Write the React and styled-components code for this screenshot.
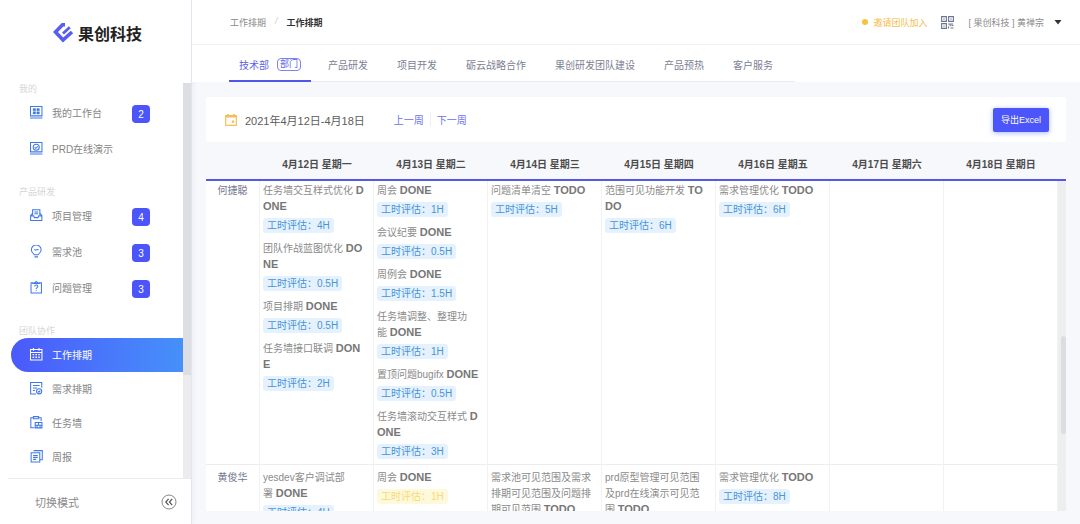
import React, { useLayoutEffect, useRef, useState } from "react";
import styled, { createGlobalStyle } from "styled-components";

const menu = [
  {
    title: "我的",
    items: [
      { name: "我的工作台", icon: "desk", count: 2 },
      { name: "PRD在线演示", icon: "demo" },
    ],
  },
  {
    title: "产品研发",
    items: [
      { name: "项目管理", icon: "project", count: 4 },
      { name: "需求池", icon: "pool", count: 3 },
      { name: "问题管理", icon: "issue", count: 3 },
    ],
  },
  {
    title: "团队协作",
    compact: true,
    items: [
      { name: "工作排期", icon: "calendar" },
      { name: "需求排期", icon: "plan" },
      { name: "任务墙", icon: "wall" },
      { name: "周报", icon: "weekly" },
    ],
  },
];

const tabs = ["技术部", "产品研发", "项目开发", "砺云战略合作", "果创研发团队建设", "产品预热", "客户服务"];

const days = [
  "4月12日 星期一",
  "4月13日 星期二",
  "4月14日 星期三",
  "4月15日 星期四",
  "4月16日 星期五",
  "4月17日 星期六",
  "4月18日 星期日",
];

const members = [
  {
    name: "何捷聪",
    days: [
      [
        { title: "任务墙交互样式优化", status: "DONE", hours: "4H" },
        { title: "团队作战蓝图优化", status: "DONE", hours: "0.5H" },
        { title: "项目排期", status: "DONE", hours: "0.5H" },
        { title: "任务墙接口联调", status: "DONE", hours: "2H" },
      ],
      [
        { title: "周会", status: "DONE", hours: "1H" },
        { title: "会议纪要", status: "DONE", hours: "0.5H" },
        { title: "周例会", status: "DONE", hours: "1.5H" },
        { title: "任务墙调整、整理功\n能", status: "DONE", hours: "1H" },
        { title: "置顶问题bugifx", status: "DONE", hours: "0.5H" },
        { title: "任务墙滚动交互样式", status: "DONE", hours: "3H" },
      ],
      [{ title: "问题清单清空", status: "TODO", hours: "5H" }],
      [{ title: "范围可见功能开发", status: "TODO", hours: "6H" }],
      [{ title: "需求管理优化", status: "TODO", hours: "6H" }],
      [],
      [],
    ],
  },
  {
    name: "黄俊华",
    days: [
      [{ title: "yesdev客户调试部\n署", status: "DONE", hours: "4H" }],
      [{ title: "周会", status: "DONE", hours: "1H", warn: true }],
      [{ title: "需求池可见范围及需求排期可见范围及问题排期可见范围", status: "TODO", hours: "4H" }],
      [{ title: "prd原型管理可见范围\n及prd在线演示可见范\n围", status: "TODO", hours: "4H" }],
      [{ title: "需求管理优化", status: "TODO", hours: "8H" }],
      [],
      [],
    ],
  },
];

const icons = {
  desk: (
    <>
      <path d="M.5.5h11v9H.5zM0 11.5h12" />
      <path d="M3 2.5h2.4v2H3zM6.6 2.5H9v2H6.6zM3 5.6h2.4v2H3zM6.6 5.6H9v2H6.6z" fill="currentColor" strokeWidth=".4" />
    </>
  ),
  demo: (
    <>
      <path d="M.5.5h11v9H.5zM0 11.5h12" />
      <circle cx="6" cy="5" r="2.9" />
      <path d="M4.6 5l1.1 1.1 1.9-2" />
    </>
  ),
  project: (
    <>
      <path d="M2.5 6V.8h7V6M4.2 2.8h3.6M4.2 4.6h3.6" />
      <path d="M2.5 4.2L.6 6.2v4.9h10.8V6.2L9.5 4.2M.6 6.6h3l.7 1.7h3.4l.7-1.7h3" />
    </>
  ),
  pool: (
    <>
      <path d="M4 9.3C3.6 8 1.3 7.2 1.3 4.7a4.7 4.7 0 0 1 9.4 0c0 2.5-2.3 3.3-2.7 4.6zM4.3 11.4h3.4" />
      <path d="M3.8 4.8c.8-1 1.5.7 2.2 0s1.4-.7 2.2 0" />
    </>
  ),
  issue: (
    <>
      <path d="M3.3 1.6H1v9.9h10V1.6H8.7M3.3 2.3L6 .5l2.7 1.8z" />
      <path d="M4.5 5.3c0-2 3-1.9 3 0 0 1.1-1.5 1.1-1.5 2.3M6 8.8v.9" />
    </>
  ),
  calendar: (
    <>
      <path d="M.5 1.500h11v10H.5zM.5 4.300h11M3.300 0v2.600M8.700 0v2.600" />
      <path d="M2.500 6.300h7M2.500 8.900h7" strokeWidth="1.300" strokeDasharray="1.500 1.200" />
    </>
  ),
  plan: (
    <>
      <path d="M11.3 5.500v-5H.6v11h5.200M2.800 3.300h6.400M2.800 5.700h4M2.800 8.100h2" />
      <circle cx="8.800" cy="8.900" r="2.500" />
      <path d="M7.800 9l.8.8 1.300-1.500" />
    </>
  ),
  wall: (
    <>
      <path d="M3.300 1.600H.8v9.600h3.400M8.300 1.600h2.400v3.200M3.300.6h5v2h-5z" />
      <path d="M5 6.300h6.500v5.100H5zM5 8.900h6.500M8.200 6.300v2.600M6.800 8.900v2.500M9.700 8.900v2.500" />
    </>
  ),
  weekly: (
    <>
      <path d="M3.500.6h8.300v8.700H9.600M1.100 2.600h8.300v8.900H1.100z" />
      <path d="M3 5.200h4.500M3 7.100h4.500M3 9h3" />
    </>
  ),
};

function MenuIcon({ name }) {
  return (
    <svg width="13" height="13" viewBox="0 0 12.5 12.5" fill="none" stroke="currentColor" strokeWidth="1" aria-hidden="true">
      {icons[name]}
    </svg>
  );
}

function Columns({ gutter }) {
  return (
    <colgroup>
      <NameCol />
      {days.map((day) => (
        <col key={day} />
      ))}
      {gutter && <GutterCol />}
    </colgroup>
  );
}

function App() {
  const [activeMenu, setActiveMenu] = useState("工作排期");
  const [activeTab, setActiveTab] = useState("技术部");
  const bodyRef = useRef(null);

  useLayoutEffect(() => {
    bodyRef.current.scrollTop = 3;
  }, []);

  return (
    <Page>
      <GlobalStyle />
      <Sidebar>
        <Logo>
          <svg width="22" height="22" viewBox="0 0 22 22" fill="none" stroke="#565df0" aria-hidden="true">
            <path d="M13 2.800h-2.500L3.500 10l7.500 8 9-8" strokeWidth="3.600" />
            <path d="M17.800 5.200l-6.800 6.300" strokeWidth="2.800" />
          </svg>
          果创科技
        </Logo>
        <MenuScroll>
          <Menu>
            {menu.map((group) => (
              <Group key={group.title}>
                <GroupTitle>{group.title}</GroupTitle>
                <MenuList $compact={group.compact}>
                  {group.items.map((item) => (
                    <li key={item.name}>
                      <MenuItem
                        href="#"
                        $compact={group.compact}
                        $active={activeMenu === item.name}
                        onClick={() => setActiveMenu(item.name)}
                      >
                        <MenuIcon name={item.icon} />
                        <span>{item.name}</span>
                        {item.count && <Badge>{item.count}</Badge>}
                      </MenuItem>
                    </li>
                  ))}
                </MenuList>
              </Group>
            ))}
          </Menu>
          <Track $color="#ececee">
            <SideThumb />
          </Track>
        </MenuScroll>
        <SidebarFooter>
          <span>切换模式</span>
          <CollapseButton aria-label="收起">
            <svg width="16" height="16" viewBox="0 0 16 16" fill="none" stroke="#555" aria-hidden="true">
              <circle cx="8" cy="8" r="7" strokeWidth=".7" />
              <path d="M7.600 4.800L4.800 8l2.800 3.200M11.200 4.800L8.400 8l2.800 3.200" strokeWidth="1.200" />
            </svg>
          </CollapseButton>
        </SidebarFooter>
      </Sidebar>

      <Main>
        <TopBar>
          <Breadcrumb>
            <a href="#">工作排期</a>
            <i>/</i>
            <b>工作排期</b>
          </Breadcrumb>
          <TopActions>
            <Invite href="#">邀请团队加入</Invite>
            <svg width="13" height="13" viewBox="0 0 13 13" fill="none" stroke="#70758f" strokeWidth="1.100" aria-hidden="true">
              <path d="M.6.6h4.800v4.800H.6zM7.600.6h4.800v4.800H7.600zM.6 7.600h4.800v4.800H.6z" />
              <path d="M2.300 3h1.400M9.300 3h1.400M2.300 10h1.400M7 8h2.200v2.200M11 7v2.500h1.500M7.500 12.400v-2M9.500 12h3" />
            </svg>
            <UserButton>
              [ 果创科技 ] 黄禅宗
              <svg width="8" height="5" viewBox="0 0 8 5" aria-hidden="true">
                <path d="M.5 0h7L4 4.500z" fill="#333" />
              </svg>
            </UserButton>
          </TopActions>
        </TopBar>

        <TabBar>
          <TabList role="tablist">
            {tabs.map((tab) => (
              <Tab
                key={tab}
                role="tab"
                aria-selected={activeTab === tab}
                $active={activeTab === tab}
                onClick={() => setActiveTab(tab)}
              >
                {tab}
                {tab === "技术部" && <TabTag>部门</TabTag>}
              </Tab>
            ))}
          </TabList>
        </TabBar>

        <Content>
          <Toolbar>
            <svg width="12" height="12" viewBox="0 0 12 12" fill="none" stroke="#f9bd55" aria-hidden="true">
              <path d="M.7 1.700h10.600v9.600H.7z" strokeWidth="1.200" />
              <path d="M.5 2.600h11M3 0v2M9 0v2" strokeWidth="1.600" />
              <path d="M6.800 6.500h2.400v2.400H6.800z" fill="#f9bd55" stroke="none" />
            </svg>
            <DateRange>2021年4月12日-4月18日</DateRange>
            <WeekButton>上一周</WeekButton>
            <WeekButton>下一周</WeekButton>
            <ExportButton>导出Excel</ExportButton>
          </Toolbar>

          <HeadTable>
            <Columns gutter />
            <thead>
              <tr>
                <th aria-label="成员" />
                {days.map((day) => (
                  <th key={day}>{day}</th>
                ))}
                <td />
              </tr>
            </thead>
          </HeadTable>
          <Body>
            <BodyScroll ref={bodyRef}>
              <BodyTable>
                <Columns />
                <tbody>
                  {members.map((member) => (
                    <tr key={member.name}>
                      <th>{member.name}</th>
                      {member.days.map((tasks, i) => (
                        <td key={days[i]}>
                          {tasks.map((task) => (
                            <Task key={task.title}>
                              <p>
                                {task.title} <b>{task.status}</b>
                              </p>
                              <Hours $warn={task.warn}>工时评估：{task.hours}</Hours>
                            </Task>
                          ))}
                        </td>
                      ))}
                    </tr>
                  ))}
                </tbody>
              </BodyTable>
            </BodyScroll>
            <Track $color="#eeeeef">
              <BodyThumb />
            </Track>
          </Body>
        </Content>
      </Main>
    </Page>
  );
}

const GlobalStyle = createGlobalStyle`
  * {
    box-sizing: border-box;
  }
  body {
    margin: 0;
    background: #f7f8fb;
    color: #8a8a8a;
    font-family: "Liberation Sans", "Noto Sans CJK SC", sans-serif;
    font-size: 10px;
  }
  a {
    color: inherit;
    text-decoration: none;
  }
  button {
    padding: 0;
    border: 0;
    background: none;
    color: inherit;
    font: inherit;
    cursor: pointer;
  }
  ul, p {
    margin: 0;
    padding: 0;
    list-style: none;
  }
  svg {
    flex: none;
  }
`;

const Page = styled.div`
  display: flex;
  height: 100vh;
`;

const Sidebar = styled.aside`
  display: flex;
  flex-direction: column;
  flex: none;
  width: 192px;
  background: #fff;
  border-right: 1px solid #e2e5f0;
  box-shadow: 0 0 6px rgba(80, 90, 200, 0.1);
`;

const Logo = styled.div`
  display: flex;
  align-items: center;
  gap: 4px;
  flex: none;
  height: 83px;
  padding: 0 0 18px 52px;
  color: #222;
  font-size: 16px;
  font-weight: bold;
`;

const MenuScroll = styled.div`
  display: flex;
  flex: 1;
  min-height: 0;
`;

const Menu = styled.nav`
  flex: 1;
  overflow: hidden;
`;

const Group = styled.section`
  & + & {
    padding-top: 19px;
  }
`;

const GroupTitle = styled.div`
  padding-left: 19px;
  color: #d6d6d6;
  font-size: 9px;
  line-height: 12px;
`;

const MenuList = styled.ul`
  padding-top: ${({ $compact }) => ($compact ? "1px" : "0")};
`;

const MenuItem = styled.a`
  display: flex;
  align-items: center;
  gap: 9px;
  height: ${({ $compact }) => ($compact ? "34px" : "36px")};
  margin-left: 11px;
  padding: 0 33px 2px 19px;
  border-radius: 17px 0 0 17px;
  background: ${({ $active }) => ($active ? "linear-gradient(90deg, #4b59fb, #4690fa)" : "none")};
  color: ${({ $active }) => ($active ? "#fff" : "#858585")};

  svg {
    color: ${({ $active }) => ($active ? "#fff" : "#3f78e8")};
  }
`;

const Badge = styled.span`
  width: 18px;
  height: 18px;
  margin: 4px 0 0 auto;
  border-radius: 4px;
  background: #4b55fa;
  color: #fff;
  line-height: 19px;
  text-align: center;
`;

const Track = styled.div`
  flex: none;
  width: 8px;
  background: ${({ $color }) => $color};
`;

const SideThumb = styled.div`
  height: 74%;
  background: #dddee1;
`;

const SidebarFooter = styled.div`
  display: flex;
  align-items: center;
  justify-content: space-between;
  flex: none;
  height: 46px;
  margin-left: 8px;
  padding: 0 14px 0 27px;
  border-top: 1px solid #ebebeb;
  font-size: 11px;
`;

const CollapseButton = styled.button`
  display: flex;
`;

const Main = styled.main`
  display: flex;
  flex-direction: column;
  flex: 1;
  min-width: 0;
`;

const TopBar = styled.header`
  display: flex;
  align-items: center;
  justify-content: space-between;
  flex: none;
  height: 45px;
  padding: 0 18px 0 38px;
  border-bottom: 1px solid #f1f1f4;
  background: #fff;
  font-size: 9px;
`;

const Breadcrumb = styled.nav`
  display: flex;
  gap: 9px;

  i {
    color: #ccc;
  }
  b {
    color: #333;
  }
`;

const TopActions = styled.div`
  display: flex;
  align-items: center;
  gap: 14px;
`;

const Invite = styled.a`
  display: flex;
  align-items: center;
  gap: 5px;
  color: #f7bd48;

  &::before {
    content: "";
    width: 6px;
    height: 6px;
    border-radius: 50%;
    background: #f9c13c;
  }
`;

const UserButton = styled.button`
  display: flex;
  align-items: center;
  gap: 10px;
`;

const TabBar = styled.div`
  flex: none;
  padding-left: 37px;
  background: #fff;
`;

const TabList = styled.div`
  display: inline-flex;
  vertical-align: top;
  gap: 1px;
  padding-right: 8px;
  box-shadow: inset 0 -1px #e9eaf0;
`;

const Tab = styled.button`
  display: flex;
  align-items: center;
  gap: 8px;
  height: 37px;
  padding: 3px 14px 0;
  border-bottom: 2px solid ${({ $active }) => ($active ? "#5056e8" : "transparent")};
  color: ${({ $active }) => ($active ? "#5d63ea" : "#7d8094")};

  &:first-child {
    margin-right: 2px;
    padding: 3px 10px 0;
  }
`;

const TabTag = styled.span`
  padding: 0 2px;
  border: 1px solid #7d82ee;
  border-radius: 4px;
  font-size: 9px;
  line-height: 11px;
`;

const Content = styled.section`
  display: flex;
  flex-direction: column;
  flex: 1;
  min-height: 0;
  padding: 15px 14px 13px;
`;

const Toolbar = styled.div`
  display: flex;
  align-items: center;
  flex: none;
  height: 45px;
  padding: 0 17px 0 19px;
  border-radius: 3px;
  background: #fff;
`;

const DateRange = styled.span`
  margin: 0 29px 0 8px;
  color: #5c5c5c;
  font-size: 11px;
`;

const WeekButton = styled.button`
  color: #6a70f0;

  & + & {
    margin-left: 6px;
    padding-left: 6px;
    border-left: 1px solid #eeeef4;
  }
`;

const ExportButton = styled.button`
  height: 24px;
  margin-left: auto;
  padding: 0 8px;
  border-radius: 2px;
  background: #4b55fa;
  box-shadow: 0 1px 5px rgba(75, 120, 250, 0.5);
  color: #fff;
  font-size: 9px;
`;

const Table = styled.table`
  width: 100%;
  table-layout: fixed;
  border-collapse: separate;
  border-spacing: 0;
`;

const NameCol = styled.col`
  width: 54px;
`;

const GutterCol = styled.col`
  width: 8px;
`;

const HeadTable = styled(Table)`
  flex: none;
  border-bottom: 2px solid #5458e6;

  th {
    height: 37px;
    padding: 5px 0 0;
    color: #4c4c4c;
  }
  td {
    padding: 0;
  }
`;

const Body = styled.div`
  display: flex;
  flex: 1;
  min-height: 0;
  background: #fff;
`;

const BodyScroll = styled.div`
  flex: 1;
  overflow: auto;
  scrollbar-width: none;
`;

const BodyTable = styled(Table)`
  th,
  td {
    padding: 5px 6px 5px 3px;
    border-right: 1px solid #f1f2f5;
    border-bottom: 1px solid #ededf0;
    line-height: 16px;
    vertical-align: top;
    word-break: break-all;
  }
  th {
    padding: 5px 0;
    color: #74778f;
    font-weight: normal;
  }
`;

const Task = styled.div`
  & + & {
    margin-top: 8px;
  }
  p {
    white-space: pre-line;
  }
  b {
    color: #777;
    font-size: 11px;
    line-height: 12px;
  }
`;

const Hours = styled.span`
  display: block;
  width: fit-content;
  margin-top: 3px;
  padding: 0 4px;
  border-radius: 3px;
  background: ${({ $warn }) => ($warn ? "#fff9dc" : "#e5f2fd")};
  color: ${({ $warn }) => ($warn ? "#f8da78" : "#4794da")};
  line-height: 15px;
`;

const BodyThumb = styled.div`
  width: 5px;
  height: 98px;
  margin: 155px 0 0 3px;
  border-radius: 3px;
  background: #dcdde1;
`;

export default App;
